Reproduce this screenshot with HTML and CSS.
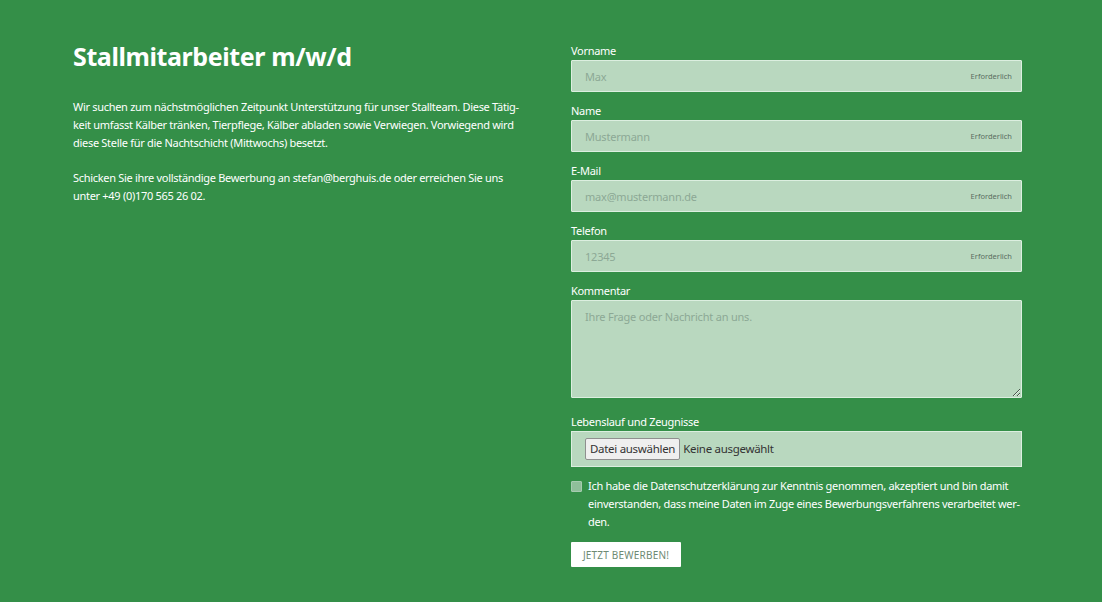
FILE: index.html
```html
<!DOCTYPE html>
<html lang="de">
<head>
  <meta charset="UTF-8" />
  <meta name="viewport" content="width=device-width, initial-scale=1.0" />
  <title>Stallmitarbeiter m/w/d</title>
  <link rel="stylesheet" href="styles.css">
</head>
<body>
  <section class="job">
    <div class="job-info">
      <h1>Stallmitarbeiter m/w/d</h1>
      <p>
        Wir suchen zum nächstmöglichen Zeitpunkt Unterstützung für unser Stallteam. Diese Tätig-<br>keit umfasst Kälber tränken, Tierpflege, Kälber abladen sowie Verwiegen. Vorwiegend wird<br>diese Stelle für die Nachtschicht (Mittwochs) besetzt.
      </p>
      <p>
        Schicken Sie ihre vollständige Bewerbung an stefan@berghuis.de oder erreichen Sie uns<br>unter +49 (0)170 565 26 02.
      </p>
    </div>

    <form class="apply" onsubmit="return false">
      <div class="field">
        <label for="vorname">Vorname</label>
        <div class="input-wrap">
          <input id="vorname" type="text" placeholder="Max" />
          <span class="required">Erforderlich</span>
        </div>
      </div>
      <div class="field">
        <label for="name">Name</label>
        <div class="input-wrap">
          <input id="name" type="text" placeholder="Mustermann" />
          <span class="required">Erforderlich</span>
        </div>
      </div>
      <div class="field">
        <label for="email">E-Mail</label>
        <div class="input-wrap">
          <input id="email" type="email" placeholder="max@mustermann.de" />
          <span class="required">Erforderlich</span>
        </div>
      </div>
      <div class="field">
        <label for="telefon">Telefon</label>
        <div class="input-wrap">
          <input id="telefon" type="tel" placeholder="12345" />
          <span class="required">Erforderlich</span>
        </div>
      </div>
      <div class="field field-wide">
        <label for="kommentar">Kommentar</label>
        <textarea id="kommentar" placeholder="Ihre Frage oder Nachricht an uns."></textarea>
      </div>
      <div class="field">
        <label>Lebenslauf und Zeugnisse</label>
        <div class="file-box">
          <span class="file-btn">Datei auswählen</span>
          <span class="file-name">Keine ausgewählt</span>
        </div>
      </div>
      <label class="consent">
        <span class="check"></span>
        <span>Ich habe die Datenschutzerklärung zur Kenntnis genommen, akzeptiert und bin damit<br>einverstanden, dass meine Daten im Zuge eines Bewerbungsverfahrens verarbeitet wer-<br>den.</span>
      </label>
      <button type="submit">Jetzt bewerben!</button>
    </form>
  </section>
</body>
</html>
```

FILE: styles.css
```css
body {
  margin: 0;
  background-color: #348f48;
  color: #fff;
  font-family: 'Noto Sans', 'Open Sans', sans-serif;
  font-size: 11px;
  line-height: 18px;
  letter-spacing: -0.3px;
}

.job {
  display: grid;
  grid-template-columns: 451px 451px;
  column-gap: 47px;
  padding: 42px 0 0 73px;
}

h1 {
  font-size: 25px;
  font-weight: bold;
  line-height: 28px;
  letter-spacing: -0.4px;
  margin: 0 0 28px;
}

.job-info p {
  margin: 0 0 17px;
  white-space: nowrap;
}

.field {
  margin-bottom: 10px;
}

.field label {
  display: block;
  margin-bottom: 0;
}

.input-wrap {
  position: relative;
}

input,
textarea {
  box-sizing: border-box;
  display: block;
  width: 100%;
  margin: 0;
  background-color: #b9d8bf;
  border: 1px solid #dcefe0;
  border-radius: 1px;
  color: #4a6a52;
  font-family: inherit;
  font-size: 11px;
  letter-spacing: -0.2px;
  outline: none;
}

input {
  height: 32px;
  padding: 0 13px;
}

textarea {
  height: 98px;
  padding: 7px 13px;
  line-height: 18px;
  resize: vertical;
}

input::placeholder,
textarea::placeholder {
  color: #8ca895;
}

.required {
  position: absolute;
  right: 10px;
  top: 11px;
  font-size: 7.5px;
  line-height: 10px;
  letter-spacing: 0;
  color: #5a6e5f;
}

.field-wide {
  margin-bottom: 15px;
}

.file-box {
  box-sizing: border-box;
  height: 36px;
  display: flex;
  align-items: center;
  padding: 0 13px;
  background-color: #b9d8bf;
  border: 1px solid #dcefe0;
  color: #333;
  font-size: 11.5px;
}

.file-btn {
  box-sizing: border-box;
  height: 22px;
  line-height: 20px;
  padding: 0 4px;
  background-color: #efefef;
  border: 1px solid #8f8f8f;
  border-radius: 2px;
  margin-right: 3px;
}

.consent {
  display: flex;
  gap: 6px;
  margin-top: 0;
  margin-bottom: 11px;
  white-space: nowrap;
}

.check {
  flex: none;
  box-sizing: border-box;
  width: 11px;
  height: 11px;
  margin-top: 4px;
  background-color: #8fbf9a;
  border: 1px solid #a6cbb0;
  border-radius: 1px;
}

button {
  display: block;
  width: 110px;
  height: 25px;
  padding: 0;
  background-color: #fff;
  border: none;
  border-radius: 1px;
  color: #6e8a74;
  font-family: inherit;
  font-size: 10px;
  text-transform: uppercase;
  letter-spacing: 0.2px;
  cursor: pointer;
}
```
